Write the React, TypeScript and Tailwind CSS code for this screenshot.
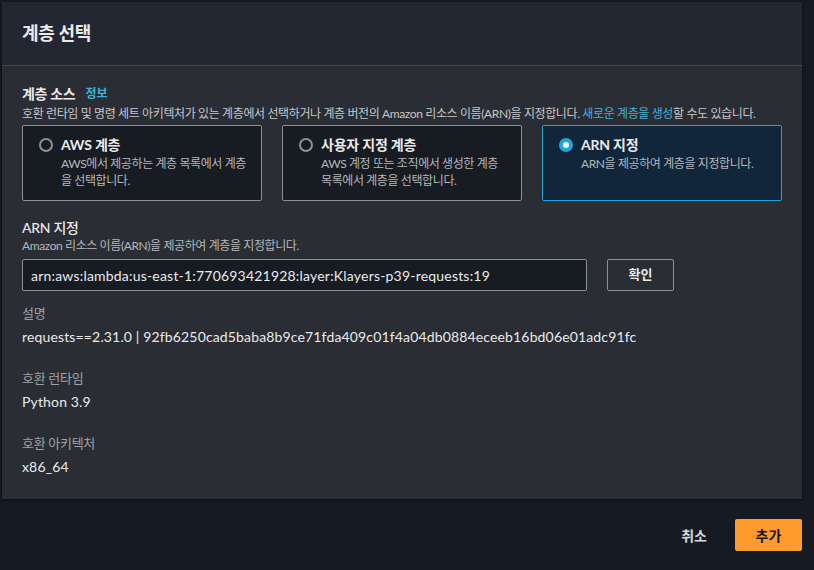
import React from "react";

const font = { fontFamily: 'Lato, "Noto Sans CJK KR", sans-serif' };

function Radio({ checked }: { checked?: boolean }) {
  return checked ? (
    <span className="mt-[3px] flex h-[14px] w-[14px] shrink-0 items-center justify-center rounded-full bg-[#22a6d7]">
      <span className="h-[6px] w-[6px] rounded-full bg-[#e9f5fb]" />
    </span>
  ) : (
    <span className="mt-[3px] h-[14px] w-[14px] shrink-0 rounded-full border-2 border-[#8d9096]" />
  );
}

function Card({ title, desc, checked }: { title: string; desc: React.ReactNode; checked?: boolean }) {
  return (
    <div
      className={
        "flex h-[76px] gap-[8px] rounded-[2px] border px-[16px] pt-[9px] " +
        (checked ? "border-[#22a6d7] bg-[#11263a]" : "border-[#8d9096] bg-[#171b22]")
      }
    >
      <Radio checked={checked} />
      <div className="flex flex-col">
        <div className="text-[14px] font-bold leading-[20px] tracking-[-0.2px] text-[#eaeaec]">{title}</div>
        <div className="whitespace-nowrap text-[12px] leading-[17px] tracking-[-0.4px] text-[#b5b8bd]">{desc}</div>
      </div>
    </div>
  );
}

function Field({ label, value }: { label: string; value: string }) {
  return (
    <div className="flex flex-col">
      <div className="text-[13px] leading-[20px] tracking-[-0.3px] text-[#9ea2a8]">{label}</div>
      <div className="mt-[4px] text-[14px] leading-[20px] tracking-[0.15px] text-[#eaeaec]">{value}</div>
    </div>
  );
}

export default function App() {
  return (
    <div className="h-[570px] w-[814px] bg-[#161a22] pl-[2px] pr-[12px] pt-[2px]" style={font}>
      <div className="flex flex-col bg-[#2a2d33] shadow-[0_1px_2px_rgba(0,0,0,0.6)]">
        <div className="flex h-[64px] items-center border-b border-[#414750] bg-[#232731] px-[20px]">
          <h1 className="text-[18px] font-bold tracking-[-0.3px] text-[#eaeaec]">계층 선택</h1>
        </div>
        <div className="flex flex-col px-[20px] pb-[22px] pt-[17px]">
          <div className="flex items-center gap-[10px] leading-[22px]">
            <span className="text-[14px] font-bold tracking-[-0.3px] text-[#eaeaec]">계층 소스</span>
            <span className="text-[12px] font-bold text-[#42b4d9]">정보</span>
          </div>
          <div className="whitespace-nowrap text-[12px] leading-[18px] tracking-[-0.38px] text-[#c6c8cc]">
            호환 런타임 및 명령 세트 아키텍처가 있는 계층에서 선택하거나 계층 버전의 Amazon 리소스 이름(ARN)을 지정합니다.{" "}
            <span className="text-[#42b4d9]">새로운 계층을 생성</span>할 수도 있습니다.
          </div>
          <div className="mt-[2px] grid grid-cols-3 gap-[20px]">
            <Card title="AWS 계층" desc={<>AWS에서 제공하는 계층 목록에서 계층<br />을 선택합니다.</>} />
            <Card title="사용자 지정 계층" desc={<>AWS 계정 또는 조직에서 생성한 계층<br />목록에서 계층을 선택합니다.</>} />
            <Card title="ARN 지정" desc="ARN을 제공하여 계층을 지정합니다." checked />
          </div>
          <div className="mt-[17px] text-[14px] font-medium leading-[20px] tracking-[-0.3px] text-[#eaeaec]">ARN 지정</div>
          <div className="text-[12px] leading-[16px] tracking-[-0.4px] text-[#b5b8bd]">Amazon 리소스 이름(ARN)을 제공하여 계층을 지정합니다.</div>
          <div className="mt-[5px] flex items-center gap-[20px]">
            <div className="flex h-[32px] w-[565px] items-center rounded-[2px] border border-[#8d9096] bg-[#171b22] px-[8px] text-[14px] tracking-[0.2px] text-[#eaeaec]">
              arn:aws:lambda:us-east-1:770693421928:layer:Klayers-p39-requests:19
            </div>
            <div className="flex h-[32px] w-[67px] items-center justify-center rounded-[2px] border border-[#8d9096] text-[13px] font-bold text-[#eaeaec]">
              확인
            </div>
          </div>
          <div className="mt-[12px] flex flex-col gap-[21px]">
            <Field label="설명" value="requests==2.31.0 | 92fb6250cad5baba8b9ce71fda409c01f4a04db0884eceeb16bd06e01adc91fc" />
            <Field label="호환 런타임" value="Python 3.9" />
            <Field label="호환 아키텍처" value="x86_64" />
          </div>
        </div>
      </div>
      <div className="mt-[20px] flex items-center justify-end gap-[28px]">
        <span className="text-[14px] font-bold text-[#d5d7da]">취소</span>
        <div className="flex h-[32px] w-[67px] items-center justify-center rounded-[2px] bg-[#ff9a2f] text-[14px] font-bold text-[#16191f]">
          추가
        </div>
      </div>
    </div>
  );
}
